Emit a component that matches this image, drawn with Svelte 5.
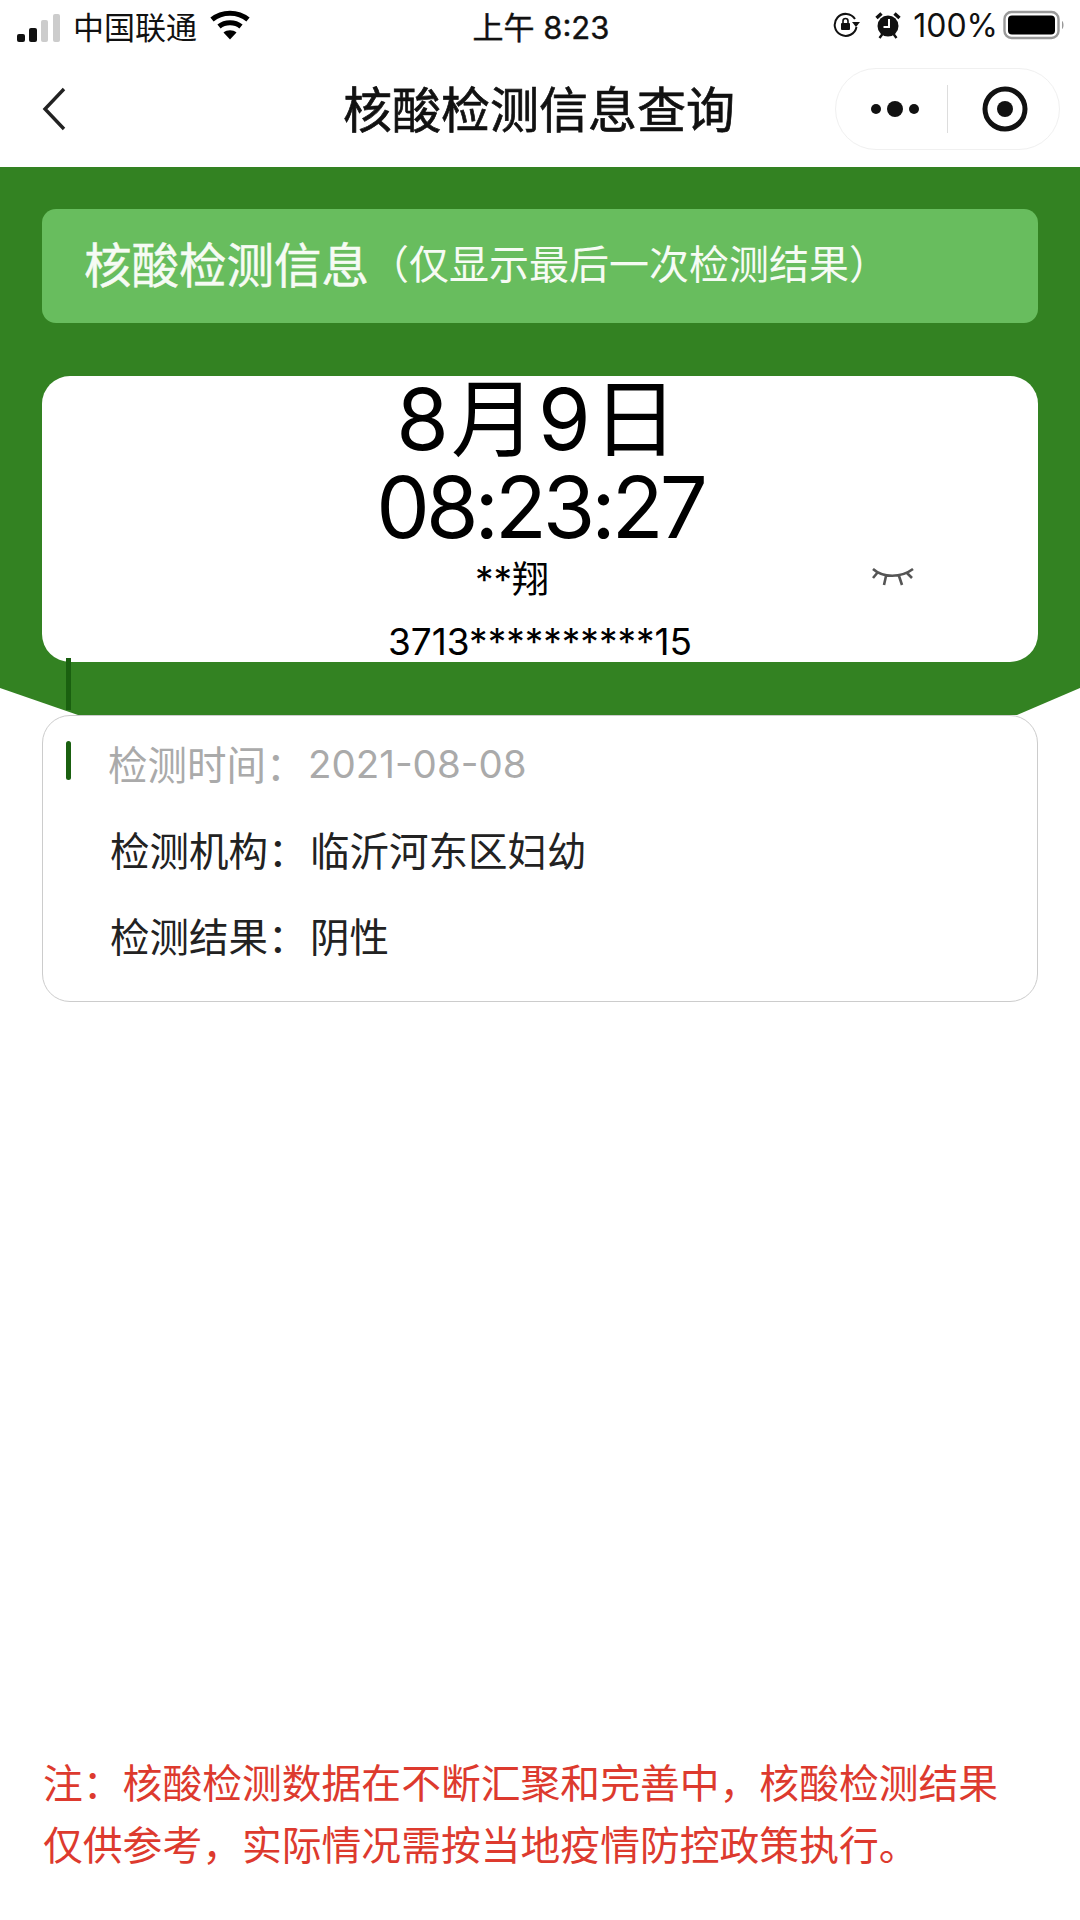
<script>
  const rows = [
    { label: '检测时间：', value: '2021-08-08', muted: true },
    { label: '检测机构：', value: '临沂河东区妇幼' },
    { label: '检测结果：', value: '阴性' }
  ];
</script>

<div class="page">
  <div class="status">
    <div class="status-left">
      <svg class="signal" width="43" height="28" viewBox="0 0 43 28">
        <rect x="0" y="20" width="8" height="8" rx="2" fill="#111" />
        <rect x="12" y="14" width="8" height="14" rx="2" fill="#111" />
        <rect x="24" y="6" width="7" height="22" rx="2" fill="#ccc" />
        <rect x="36" y="0" width="7" height="28" rx="2" fill="#ccc" />
      </svg>
      <span class="carrier">中国联通</span>
      <svg class="wifi" width="40" height="30" viewBox="0 0 40 30">
        <path d="M2 9.5C12 1 28 1 38 9.5" fill="none" stroke="#000" stroke-width="5" />
        <path d="M9 16.5C15 11.5 25 11.5 31 16.5" fill="none" stroke="#000" stroke-width="5" />
        <path d="M13.5 22.5C17 19.5 23 19.5 26.5 22.5L20 29.5Z" fill="#000" />
      </svg>
    </div>
    <div class="clock">上午 8:23</div>
    <div class="status-right">
      <svg width="27" height="26" viewBox="0 0 27 26">
        <path d="M22 7A11 11 0 1 0 23.5 15" fill="none" stroke="#111" stroke-width="2" />
        <path d="M19 10H27L23 15Z" fill="#111" />
        <rect x="8" y="11" width="9" height="7" rx="1" fill="#111" />
        <path d="M10 11V9a2.5 2.5 0 0 1 5 0v2" fill="none" stroke="#111" stroke-width="1.6" />
      </svg>
      <svg class="alarm" width="26" height="27" viewBox="0 0 25 27">
        <circle cx="12.5" cy="14" r="10.5" fill="#111" />
        <path d="M1 6L6 1.5M24 6L19 1.5" stroke="#111" stroke-width="3.4" />
        <path d="M4 26L7 22M21 26L18 22" stroke="#111" stroke-width="2.4" />
        <path d="M13.5 7V15H8" fill="none" stroke="#fff" stroke-width="2" />
      </svg>
      <span class="percent">100%</span>
      <svg class="battery" width="62" height="30" viewBox="0 0 62 30">
        <rect x="1.5" y="2" width="54" height="26" rx="7" fill="none" stroke="#999" stroke-width="2.4" />
        <rect x="5" y="5.5" width="47" height="19" rx="4" fill="#000" />
        <path d="M59 11c2 1 2 7 0 8z" fill="#999" />
      </svg>
    </div>
  </div>

  <div class="nav">
    <svg class="back" width="24" height="44" viewBox="0 0 24 44">
      <path d="M22 2L3 22L22 42" fill="none" stroke="#222" stroke-width="3.4" />
    </svg>
    <div class="title">核酸检测信息查询</div>
    <div class="capsule">
      <svg width="48" height="18" viewBox="0 0 48 18">
        <circle cx="5" cy="9" r="5" fill="#111" />
        <circle cx="24" cy="9" r="8" fill="#111" />
        <circle cx="43" cy="9" r="5" fill="#111" />
      </svg>
      <span class="divider"></span>
      <svg width="46" height="46" viewBox="0 0 46 46">
        <circle cx="23" cy="23" r="20" fill="none" stroke="#111" stroke-width="5" />
        <circle cx="23" cy="23" r="8" fill="#111" />
      </svg>
    </div>
  </div>

  <div class="hero">
    <div class="banner">
      <span class="banner-title">核酸检测信息</span><span class="banner-note">（仅显示最后一次检测结果）</span>
    </div>
    <div class="card">
      <div class="date">8月9日</div>
      <div class="time">08:23:27</div>
      <div class="name">**翔</div>
      <div class="idno">3713**********15</div>
      <svg class="eye" width="44" height="20" viewBox="0 0 44 20">
        <path d="M2 2C12 11 30 11 42 2M7 5L2 11M15 9L13 18M28 9L31 18M36 6L41 11" fill="none" stroke="#555" stroke-width="2.6" />
      </svg>
    </div>
  </div>
  <span class="tick tick-top"></span>

  <div class="info">
    <span class="tick tick-row"></span>
    {#each rows as row}
      <div class="row" class:muted={row.muted}>
        <span class="label">{row.label}</span><span class="value">{row.value}</span>
      </div>
    {/each}
  </div>

  <div class="note">
    <p>注：核酸检测数据在不断汇聚和完善中，核酸检测结果</p>
    <p>仅供参考，实际情况需按当地疫情防控政策执行。</p>
  </div>
</div>

<style>
  :global(body) {
    margin: 0;
    background: #fff;
  }

  .page {
    position: relative;
    width: 1080px;
    height: 1920px;
    display: flex;
    flex-direction: column;
    font-family: Inter, "Noto Sans CJK SC", sans-serif;
    color: #111;
    overflow: hidden;
  }

  .status {
    height: 50px;
    display: grid;
    grid-template-columns: 1fr auto 1fr;
    align-items: center;
    padding: 0 15px 0 17px;
    box-sizing: border-box;
    font-size: 31px;
  }

  .status-left,
  .status-right {
    display: flex;
    align-items: center;
  }

  .status-right {
    justify-content: flex-end;
  }

  .signal {
    margin-right: 13px;
    margin-top: 6px;
  }

  .wifi {
    margin-left: 13px;
  }

  .alarm {
    margin-left: 15px;
  }

  .percent {
    margin: 0 5px 0 12px;
    font-size: 32px;
  }

  .clock {
    font-size: 31px;
    -webkit-text-stroke: 0.4px #111;
  }

  .nav {
    height: 117px;
    position: relative;
    display: flex;
    align-items: center;
    justify-content: center;
  }

  .back {
    position: absolute;
    left: 42px;
    top: 37px;
  }

  .title {
    font-size: 49px;
    -webkit-text-stroke: 0.7px #111;
    margin: -5px 0 0 -2px;
  }

  .capsule {
    position: absolute;
    left: 835px;
    top: 18px;
    width: 225px;
    height: 82px;
    box-sizing: border-box;
    border: 1px solid #f0f0f0;
    border-radius: 41px;
    display: flex;
    align-items: center;
    padding-left: 35px;
  }

  .divider {
    width: 1px;
    height: 48px;
    background: #ddd;
    margin: 0 34px 0 28px;
  }

  .hero {
    height: 548px;
    box-sizing: border-box;
    padding: 42px 42px 0;
    background: #338222;
    clip-path: polygon(0 0, 100% 0, 100% 521px, 1017px 100%, 78px 100%, 0 521px);
  }

  .banner {
    height: 114px;
    display: flex;
    align-items: center;
    box-sizing: border-box;
    padding: 0 0 8px 42px;
    background: #68bd5e;
    border-radius: 14px;
    color: #f6fbf4;
  }

  .banner-title {
    font-size: 47.5px;
    -webkit-text-stroke: 0.5px #f6fbf4;
  }

  .banner-note {
    font-size: 40px;
  }

  .card {
    position: relative;
    height: 286px;
    margin-top: 53px;
    background: #fff;
    border-radius: 28px;
    text-align: center;
    color: #000;
  }

  .date,
  .time {
    font-size: 85px;
    line-height: 88px;
  }

  .date {
    padding-right: 4px;
    letter-spacing: 2px;
  }

  .time {
    letter-spacing: -4px;
  }

  .name {
    font-size: 37px;
    line-height: 44px;
    margin: 6px 56px 0 0;
  }

  .idno {
    font-size: 37px;
    line-height: 44px;
    margin-top: 18px;
  }

  .eye {
    position: absolute;
    right: 123px;
    top: 191px;
  }

  .tick {
    position: absolute;
    left: 66px;
    width: 5px;
    background: #1a6010;
  }

  .tick-top {
    top: 658px;
    height: 52px;
  }

  .info {
    height: 287px;
    margin: 0 42px;
    box-sizing: border-box;
    border: 1px solid #ccc;
    border-radius: 28px;
    padding: 3px 0 0 67px;
  }

  .tick-row {
    top: 741px;
    height: 39px;
    border-radius: 3px;
  }

  .row {
    height: 86px;
    display: flex;
    align-items: center;
    font-size: 39.5px;
    color: #222;
  }

  .label {
    width: 200px;
  }

  .muted {
    color: #aaa;
    margin-left: -2px;
  }

  .muted .value {
    font-size: 38.5px;
    padding-top: 4px;
  }

  .note {
    margin: 751px 0 0 43px;
    font-size: 39.8px;
    line-height: 62px;
    color: #dd3a2e;
  }

  .note p {
    margin: 0;
  }
</style>
